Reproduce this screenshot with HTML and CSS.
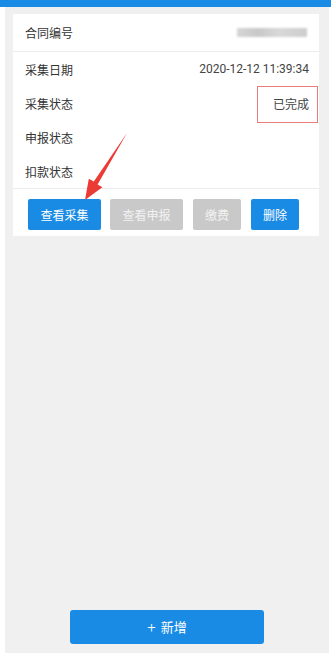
FILE: index.html
```html
<!DOCTYPE html>
<html lang="zh">
<head>
<meta charset="utf-8">
<link rel="stylesheet" href="styles.css">
</head>
<body>
<div class="topbar"></div>
<div class="page">
  <div class="card">
    <div class="row first">
      <span class="label">合同编号</span>
      <span class="blur"></span>
    </div>
    <div class="row">
      <span class="label">采集日期</span>
      <span class="value">2020-12-12 11:39:34</span>
    </div>
    <div class="row">
      <span class="label">采集状态</span>
      <span class="value">已完成</span>
    </div>
    <div class="row">
      <span class="label">申报状态</span>
    </div>
    <div class="row">
      <span class="label">扣款状态</span>
    </div>
    <div class="actions">
      <button class="btn wide primary">查看采集</button>
      <button class="btn wide disabled">查看申报</button>
      <button class="btn short disabled">缴费</button>
      <button class="btn short primary">删除</button>
    </div>
  </div>
  <div class="footer">
    <button class="add"><span class="plus">+</span>新增</button>
  </div>
</div>
<div class="mark-box"></div>
<svg class="arrow" width="331" height="658" viewBox="0 0 331 658">
  <polygon points="85,200 88.8,178.8 93.8,181.5 127,133 97.6,184.4 102.4,187.2" fill="#ea3b35"/>
</svg>
</body>
</html>
```
FILE: styles.css
```css
* { box-sizing: border-box; }
html, body { margin: 0; padding: 0; }
body {
  background: #ffffff;
  font-family: Roboto, "Noto Sans CJK SC", sans-serif;
  width: 331px;
  height: 658px;
  position: relative;
  overflow: hidden;
}
.topbar {
  height: 7px;
  background: #1a8be5;
}
.page {
  margin: 0 2px 0 5px;
  height: 646px;
  background: #f0f0f0;
  display: flex;
  flex-direction: column;
}
.card {
  margin: 7px 10px 0 8px;
  background: #ffffff;
}
.row {
  height: 34px;
  display: flex;
  align-items: center;
  justify-content: space-between;
  padding: 0 10px 0 12px;
  font-size: 12px;
  color: #333333;
}
.row.first {
  height: 38px;
  border-bottom: 1px solid #ececec;
  padding-right: 12px;
}
.label { color: #333333; }
.value { color: #444444; }
.blur {
  width: 70px;
  height: 9px;
  background: linear-gradient(90deg, #d6d6d6 0%, #c8c8c8 30%, #d8d8d8 60%, #cdcdcd 100%);
  filter: blur(1.2px);
}
.actions {
  border-top: 1px solid #ececec;
  padding: 10px 15px 6px;
  display: flex;
  gap: 9px;
}
.btn {
  height: 31px;
  border: none;
  border-radius: 2px;
  font-family: inherit;
  font-size: 12px;
  color: #ffffff;
  padding: 0;
}
.btn.wide { width: 73px; }
.btn.short { width: 48px; margin-left: 1px; }
.btn.primary { background: #1a8be5; }
.btn.disabled { background: #c9c9c9; color: #f2f2f2; }
.footer {
  margin-top: auto;
  padding-bottom: 9px;
  display: flex;
  justify-content: center;
}
.add {
  width: 194px;
  height: 34px;
  border: none;
  border-radius: 3px;
  background: #1a8be5;
  color: #ffffff;
  font-family: inherit;
  font-size: 13px;
  padding: 0 0 2px;
}
.plus {
  font-weight: 300;
  font-size: 15px;
  margin-right: 5px;
}
.mark-box {
  position: absolute;
  left: 257px;
  top: 86px;
  width: 61px;
  height: 37px;
  border: 1px solid #e87c7c;
}
.arrow {
  position: absolute;
  left: 0;
  top: 0;
  pointer-events: none;
}
```
